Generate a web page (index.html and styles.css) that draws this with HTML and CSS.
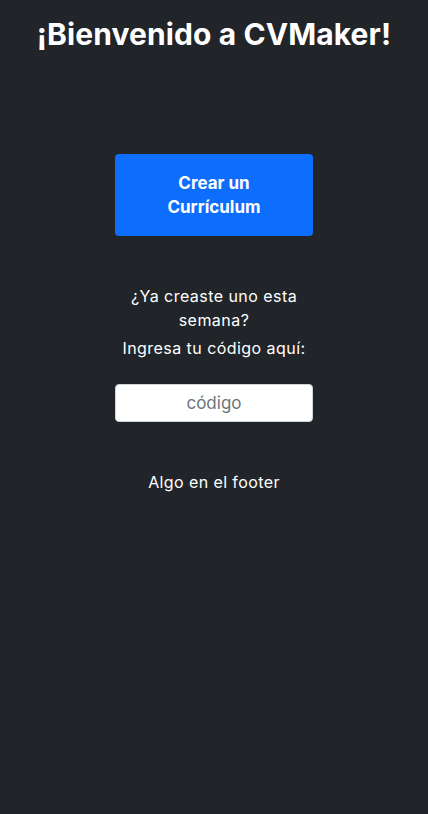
FILE: index.html
```html
<!DOCTYPE html>
<html lang="es">
<head>
<meta charset="utf-8">
<title>CVMaker</title>
<link rel="stylesheet" href="styles.css">
</head>
<body>
<header class="header">
  <h1 class="title">¡Bienvenido a CVMaker!</h1>
</header>
<main class="main">
  <button class="btn-create" type="button">Crear un Currículum</button>
  <div class="code-block">
    <p class="question">¿Ya creaste uno esta semana?</p>
    <p class="prompt">Ingresa tu código aquí:</p>
  </div>
  <input class="code-input" type="text" placeholder="código">
  <footer class="footer">Algo en el footer</footer>
</main>
</body>
</html>
```
FILE: styles.css
```css
html, body {
  margin: 0;
  padding: 0;
}
body {
  background: #212529;
  color: #ffffff;
  font-family: "Inter", "Noto Sans", sans-serif;
  min-height: 814px;
}
.header {
  padding-top: 16px;
}
.title {
  margin: 0;
  text-align: center;
  font-size: 30px;
  line-height: 36px;
  font-weight: 700;
  letter-spacing: 0.1px;
}
.main {
  display: flex;
  flex-direction: column;
  align-items: center;
  padding-top: 102px;
}
.btn-create {
  width: 198px;
  height: 82px;
  border: none;
  border-radius: 4px;
  background: #0d6efd;
  color: #ffffff;
  font-family: inherit;
  font-size: 17px;
  font-weight: 700;
  line-height: 24px;
  padding: 0 40px;
}
.code-block {
  width: 198px;
  margin-top: 48px;
  text-align: center;
  display: flex;
  flex-direction: column;
  gap: 4px;
}
.question, .prompt {
  margin: 0;
  font-size: 16px;
  line-height: 24px;
  letter-spacing: 0.45px;
}
.prompt {
  white-space: nowrap;
}
.code-input {
  box-sizing: border-box;
  width: 198px;
  height: 38px;
  margin-top: 24px;
  border: 1px solid #ced4da;
  border-radius: 4px;
  background: #ffffff;
  text-align: center;
  font-family: inherit;
  font-size: 17px;
  color: #212529;
}
.code-input::placeholder {
  color: #6c757d;
}
.footer {
  margin-top: 48px;
  font-size: 16px;
  line-height: 24px;
  letter-spacing: 0.4px;
}
```
